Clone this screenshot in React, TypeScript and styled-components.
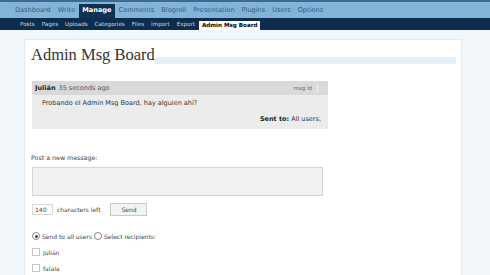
import React from 'react';
import styled, { createGlobalStyle } from 'styled-components';

const GlobalStyle = createGlobalStyle`
  html, body {
    margin: 0;
    padding: 0;
    background: #f2f7fb;
    font-family: "DejaVu Sans", Verdana, sans-serif;
    font-size: 7px;
    color: #333;
  }
`;

const Page = styled.div`
  width: 490px;
  height: 275px;
  overflow: hidden;
  background: #f2f7fb;
`;

const TopBar = styled.div`
  height: 16px;
  border-top: 2px solid #3a6b92;
  background: #83b4d8;
  display: flex;
  align-items: flex-end;
  padding-left: 12px;
`;

const TopItem = styled.span<{ active?: boolean }>`
  padding: 0 3px;
  height: 14px;
  line-height: 13px;
  font-size: 6.6px;
  color: ${({ active }) => (active ? '#fff' : '#2d5a82')};
  background: ${({ active }) => (active ? '#0d3252' : 'transparent')};
  font-weight: ${({ active }) => (active ? 'bold' : 'normal')};
  margin-right: 1px;
`;

const SubBar = styled.div`
  height: 12px;
  background: #0c2d4d;
  display: flex;
  align-items: flex-end;
  padding-left: 17px;
`;

const SubItem = styled.span<{ active?: boolean }>`
  padding: 0 3px;
  height: ${({ active }) => (active ? '9px' : '11px')};
  line-height: ${({ active }) => (active ? '9px' : '10px')};
  font-size: 5.6px;
  color: ${({ active }) => (active ? '#000' : '#c7dbea')};
  background: ${({ active }) => (active ? '#fff' : 'transparent')};
  font-weight: ${({ active }) => (active ? 'bold' : 'normal')};
  margin-right: 1px;
`;

const Card = styled.div`
  margin: 9px 0 0 24px;
  width: 438px;
  height: 240px;
  background: #fff;
  border: 1px solid #e3ebf2;
  border-bottom: none;
  padding: 6px 0 0 6px;
  box-sizing: border-box;
`;

const TitleRow = styled.div`
  position: relative;
  height: 26px;
`;

const TitleStripe = styled.div`
  position: absolute;
  left: 124px;
  right: 5px;
  top: 11px;
  height: 7px;
  background: #e4f0fa;
`;

const Title = styled.h1`
  position: relative;
  margin: 0;
  font-family: "Liberation Serif", "Times New Roman", serif;
  font-weight: normal;
  font-size: 16.5px;
  line-height: 18px;
  color: #333;
`;

const Message = styled.div`
  margin: 9px 0 0 1px;
  width: 296px;
`;

const MessageHead = styled.div`
  height: 14px;
  background: #d9d9d9;
  display: flex;
  align-items: center;
  padding: 0 4px 0 3px;
  font-size: 6.5px;
`;

const Author = styled.b`
  color: #222;
  margin-right: 3px;
`;

const Ago = styled.span`
  color: #555;
  flex: 1;
`;

const MsgId = styled.span`
  color: #666;
  font-size: 5.5px;
  padding-right: 5px;
  margin-right: 6px;
  border-right: 1px solid #f2f2f2;
  line-height: 9px;
`;

const MessageBody = styled.div`
  background: #ececec;
  height: 34px;
  padding: 4px 7px 0 10px;
  box-sizing: border-box;
  font-size: 6.5px;
  color: #333;
`;

const SentTo = styled.div`
  text-align: right;
  margin-top: 8px;
  b {
    color: #222;
  }
`;

const Label = styled.div`
  margin-top: 25px;
  font-size: 6.3px;
  color: #444;
`;

const TextArea = styled.div`
  margin: 6px 0 0 1px;
  width: 291px;
  height: 29px;
  box-sizing: border-box;
  background: #f1f1f1;
  border: 1px solid #d6d6d6;
`;

const Controls = styled.div`
  display: flex;
  align-items: center;
  margin: 7px 0 0 1px;
  font-size: 6px;
  color: #444;
`;

const Counter = styled.div`
  width: 21px;
  height: 11px;
  box-sizing: border-box;
  border: 1px solid #d8d8d8;
  line-height: 9px;
  padding-left: 2px;
  margin-right: 4px;
`;

const SendButton = styled.div`
  margin-left: 10px;
  width: 37px;
  height: 13px;
  box-sizing: border-box;
  border: 1px solid #c9c9c9;
  background: #f3f3f3;
  text-align: center;
  line-height: 11px;
`;

const RadioRow = styled.div`
  display: flex;
  align-items: center;
  margin: 16px 0 0 1px;
  font-size: 6px;
  color: #444;
`;

const Radio = styled.span<{ checked?: boolean }>`
  display: inline-flex;
  align-items: center;
  justify-content: center;
  width: 6px;
  height: 6px;
  border: 1px solid #888;
  border-radius: 50%;
  margin-right: 2px;
  &::after {
    content: '';
    width: 3px;
    height: 3px;
    border-radius: 50%;
    background: ${({ checked }) => (checked ? '#444' : 'transparent')};
  }
`;

const CheckRow = styled.div`
  display: flex;
  align-items: center;
  margin: 8px 0 0 1px;
  font-size: 6px;
  color: #444;
`;

const Box = styled.span`
  width: 6px;
  height: 6px;
  border: 1px solid #c4c4c4;
  margin-right: 3px;
`;

const topItems = ['Dashboard', 'Write', 'Manage', 'Comments', 'Blogroll', 'Presentation', 'Plugins', 'Users', 'Options'];
const subItems = ['Posts', 'Pages', 'Uploads', 'Categories', 'Files', 'Import', 'Export', 'Admin Msg Board'];

export default function App() {
  return (
    <Page>
      <GlobalStyle />
      <TopBar>
        {topItems.map((t) => (
          <TopItem key={t} active={t === 'Manage'}>{t}</TopItem>
        ))}
      </TopBar>
      <SubBar>
        {subItems.map((t) => (
          <SubItem key={t} active={t === 'Admin Msg Board'}>{t}</SubItem>
        ))}
      </SubBar>
      <Card>
        <TitleRow>
          <TitleStripe />
          <Title>Admin Msg Board</Title>
        </TitleRow>
        <Message>
          <MessageHead>
            <Author>Julián</Author>
            <Ago>35 seconds ago</Ago>
            <MsgId>msg id</MsgId>
          </MessageHead>
          <MessageBody>
            Probando el Admin Msg Board, hay alguien ahí?
            <SentTo><b>Sent to:</b> All users,</SentTo>
          </MessageBody>
        </Message>
        <Label>Post a new message:</Label>
        <TextArea />
        <Controls>
          <Counter>140</Counter>
          characters left
          <SendButton>Send</SendButton>
        </Controls>
        <RadioRow>
          <Radio checked />Send to all users&nbsp;
          <Radio />Select recipients:
        </RadioRow>
        <CheckRow><Box />Julián</CheckRow>
        <CheckRow><Box />falala</CheckRow>
      </Card>
    </Page>
  );
}
